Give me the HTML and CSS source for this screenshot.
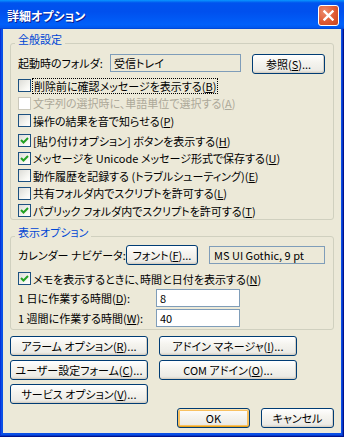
FILE: index.html
```html
<!DOCTYPE html>
<html lang="ja">
<head>
  <meta charset="UTF-8">
  <title>詳細オプション</title>
  <link rel="stylesheet" href="styles.css">
</head>
<body>

<div class="window">
  <div class="titlebar">
    <span class="title">詳細オプション</span>
    <span class="close">
      <svg width="11" height="11" viewBox="0 0 11 11"><path d="M1.5 1.5 L9.5 9.5 M9.5 1.5 L1.5 9.5" stroke="#fff" stroke-width="2.4" stroke-linecap="square"/></svg>
    </span>
  </div>

  <div class="client">
    <section class="group general">
      <div class="group-title">全般設定</div>
      <div class="row folder">
        <span class="label folder-label">起動時のフォルダ:</span>
        <div class="field readonly folder-field">受信トレイ</div>
        <button class="btn browse">参照(<u>S</u>)...</button>
      </div>
      <ul class="checks">
        <li><span class="box"></span><span class="focus">削除前に確認メッセージを表示する(<u>B</u>)</span></li>
        <li class="disabled"><span class="box"></span><span>文字列の選択時に、単語単位で選択する(<u>A</u>)</span></li>
        <li><span class="box"></span><span>操作の結果を音で知らせる(<u>P</u>)</span></li>
        <li class="spaced"><span class="box"><svg width="11" height="11" viewBox="0 0 11 11"><path d="M2 5 L4.5 7.5 L9 3" fill="none" stroke="#21a121" stroke-width="2"/></svg></span><span>[貼り付けオプション] ボタンを表示する(<u>H</u>)</span></li>
        <li><span class="box"><svg width="11" height="11" viewBox="0 0 11 11"><path d="M2 5 L4.5 7.5 L9 3" fill="none" stroke="#21a121" stroke-width="2"/></svg></span><span>メッセージを Unicode メッセージ形式で保存する(<u>U</u>)</span></li>
        <li><span class="box"></span><span>動作履歴を記録する (トラブルシューティング)(<u>E</u>)</span></li>
        <li><span class="box"></span><span>共有フォルダ内でスクリプトを許可する(<u>L</u>)</span></li>
        <li><span class="box"><svg width="11" height="11" viewBox="0 0 11 11"><path d="M2 5 L4.5 7.5 L9 3" fill="none" stroke="#21a121" stroke-width="2"/></svg></span><span>パブリック フォルダ内でスクリプトを許可する(<u>T</u>)</span></li>
      </ul>
    </section>

    <section class="group display">
      <div class="group-title">表示オプション</div>
      <div class="row calendar">
        <span class="label calendar-label">カレンダー ナビゲータ:</span>
        <button class="btn font-btn">フォント(<u>F</u>)...</button>
        <div class="field readonly font-field">MS UI Gothic, 9 pt</div>
      </div>
      <ul class="checks">
        <li class="memo"><span class="box"><svg width="11" height="11" viewBox="0 0 11 11"><path d="M2 5 L4.5 7.5 L9 3" fill="none" stroke="#21a121" stroke-width="2"/></svg></span><span>メモを表示するときに、時間と日付を表示する(<u>N</u>)</span></li>
      </ul>
      <div class="row hours">
        <span class="label hours-label">1 日に作業する時間(<u>D</u>):</span>
        <div class="field hours-field">8</div>
      </div>
      <div class="row hours">
        <span class="label hours-label">1 週間に作業する時間(<u>W</u>):</span>
        <div class="field hours-field">40</div>
      </div>
    </section>

    <div class="actions">
      <button class="btn">アラーム オプション(<u>R</u>)...</button>
      <button class="btn">アドイン マネージャ(<u>I</u>)...</button>
      <button class="btn">ユーザー設定フォーム(<u>C</u>)...</button>
      <button class="btn">COM アドイン(<u>O</u>)...</button>
      <button class="btn">サービス オプション(<u>V</u>)...</button>
    </div>

    <div class="footer">
      <button class="btn default">OK</button>
      <button class="btn">キャンセル</button>
    </div>
  </div>
</div>

</body>
</html>
```

FILE: styles.css
```css
* { box-sizing: border-box; }
body { margin: 0; font-family: "Noto Sans CJK JP", "Liberation Sans", sans-serif; font-size: 11px; font-feature-settings: "palt"; color: #000; background: #fff; }
u { text-decoration: underline; text-decoration-thickness: 1px; text-underline-offset: 1px; }

/* window frame */
.window { width: 344px; height: 437px; display: flex; flex-direction: column; background: #0a4fe6; box-shadow: inset -1px -1px #00138c, inset 1px 1px #0831d9, inset -2px -2px #0637c8; }
.titlebar { height: 29px; flex: none; display: flex; align-items: flex-start; padding: 5px 5px 0 7px; background: linear-gradient(#0997ff 0%, #0053ee 10%, #0050ee 40%, #0060fa 85%, #0057ee 95%, #0042d0 100%); }
.title { flex: 1; padding-top: 2px; color: #fff; font-weight: bold; font-size: 12px; line-height: 18px; text-shadow: 1px 1px #0a1a8c; }
.close { width: 21px; height: 21px; display: flex; align-items: center; justify-content: center; border: 1px solid #fff; border-radius: 3px; background: radial-gradient(circle at 30% 30%, #ec8b6c, #df5a33 55%, #c8431c); }

.client { flex: 1; margin: 0 3px 4px; background: #ece9d8; padding: 14px 7px 0; }

/* group boxes */
.group { border: 1px solid #d0d0bf; border-radius: 3px; }
.group-title { width: fit-content; margin: -12px 0 0 4px; padding: 0 3px; line-height: 14px; color: #0046d5; background: #ece9d8; }
.general { height: 177px; }
.display { height: 94px; margin-top: 16px; }

.row { display: flex; align-items: center; padding-left: 7px; }
.label { white-space: nowrap; }
.field { height: 18px; line-height: 16px; padding-left: 3px; border: 1px solid #7f9db9; background: #fff; white-space: nowrap; }
.field.readonly { background: #ece9d8; }

.folder { margin-top: 8px; align-items: flex-start; }
.folder-label { width: 92px; line-height: 18px; }
.folder-field { width: 131px; }
.browse { width: 73px; height: 19px; margin-left: 11px; }

.calendar { margin-top: 6px; height: 19px; }
.calendar-label { width: 108px; }
.font-btn { width: 72px; height: 18px; }
.font-field { width: 116px; margin-left: 11px; padding-left: 4px; }

.hours { height: 18px; margin-top: 2px; }
.hours-label { width: 138px; }
.hours-field { width: 84px; }

/* checkboxes */
.checks { list-style: none; margin: 3px 0 0; padding: 0 0 0 7px; }
.checks li { height: 17.5px; display: flex; align-items: center; gap: 2px; white-space: nowrap; }
.checks li.spaced { margin-top: 2.5px; }
.checks li.memo { height: 17px; margin-top: 6px; }
.box { width: 13px; height: 13px; flex: none; display: flex; align-items: center; justify-content: center; border: 1px solid #1c5180; background: linear-gradient(135deg, #dcdcd7, #f8f8f4 70%, #fff); }
.disabled { color: #aca899; }
.disabled .box { border-color: #cac8bb; background: #fff; }
.focus { padding: 0 1px; line-height: 14px; border: 1px dotted #000; margin-left: -1px; }

/* buttons */
.btn { font: inherit; font-feature-settings: "palt"; color: #000; padding: 0; height: 20px; border: 1px solid #003c74; border-radius: 3px; background: linear-gradient(#fff, #f5f4ef 40%, #ecebe6 85%, #d8d2c6); box-shadow: inset -1px -1px #d6d0c5; white-space: nowrap; }
.btn.default { box-shadow: inset 0 1px #fde5b5, inset 0 -1px #e5a01a, inset 0 0 0 2px #f8c161; }

.actions { display: grid; grid-template-columns: 138px 138px; gap: 4px 11px; margin-top: 6px; }
.footer { display: flex; justify-content: flex-end; gap: 11px; margin-top: 4px; }
.footer .btn { width: 73px; }
```
